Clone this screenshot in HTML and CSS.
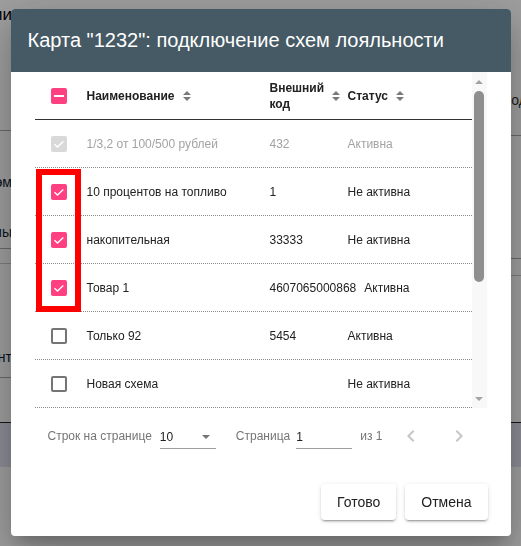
FILE: index.html
```html
<!DOCTYPE html>
<html>

<head>
	<meta charset="utf-8">
	<link rel="stylesheet" href="styles.css">
</head>

<body>
	<!-- Page behind the dialog -->
	<div class="page">
		<div class="page-left">
			<div class="bg-text bg-title"><span>Акции</span></div>
			<div class="bg-rule rule-1"></div>
			<div class="bg-text text-2"><span>Тип схэм</span></div>
			<div class="bg-text text-3"><span>Схемы</span></div>
			<div class="bg-rule rule-4"></div>
			<div class="bg-rule rule-5"></div>
			<div class="bg-text text-6"><span>Клиент</span></div>
			<div class="bg-rule rule-7"></div>
			<div class="bg-band band-left"></div>
		</div>
		<div class="page-right">
			<div class="bg-text text-r1"><span>Код</span></div>
			<div class="bg-rule rule-r2"></div>
			<div class="bg-rule rule-r3"></div>
			<div class="bg-rule rule-r4"></div>
			<div class="bg-band band-right"></div>
		</div>
	</div>

	<div class="overlay">
		<div class="dialog">
			<div class="dialog-title">Карта "1232": подключение схем лояльности</div>

			<div class="dialog-body">
				<div class="table-wrap">
					<div class="table-scroll">
						<div class="row row-head">
							<div class="cell cell-check">
								<span class="checkbox checked"><span class="dash"></span></span>
							</div>
							<div class="cell cell-name head-cell">
								<span class="head-text">Наименование</span>
								<svg class="sort" viewBox="0 0 10 12"><path d="M1 5L5 1L9 5Z M1 7L5 11L9 7Z" /></svg>
							</div>
							<div class="cell cell-code head-cell">
								<span class="head-text">Внешний код</span>
								<svg class="sort" viewBox="0 0 10 12"><path d="M1 5L5 1L9 5Z M1 7L5 11L9 7Z" /></svg>
							</div>
							<div class="cell cell-status head-cell">
								<span class="head-text">Статус</span>
								<svg class="sort" viewBox="0 0 10 12"><path d="M1 5L5 1L9 5Z M1 7L5 11L9 7Z" /></svg>
							</div>
						</div>

						<div class="table-body">
							<div class="row row-disabled">
								<div class="cell cell-check">
									<span class="checkbox disabled"><svg viewBox="0 0 16 16"><path d="M3.5 8.3L6.5 11L12.3 5.4" /></svg></span>
								</div>
								<div class="cell cell-name">1/3,2 от 100/500 рублей</div>
								<div class="cell cell-code">432</div>
								<div class="cell cell-status">Активна</div>
							</div>
							<div class="row">
								<div class="cell cell-check">
									<span class="checkbox checked"><svg viewBox="0 0 16 16"><path d="M3.5 8.3L6.5 11L12.3 5.4" /></svg></span>
								</div>
								<div class="cell cell-name">10 процентов на топливо</div>
								<div class="cell cell-code">1</div>
								<div class="cell cell-status">Не активна</div>
							</div>
							<div class="row">
								<div class="cell cell-check">
									<span class="checkbox checked"><svg viewBox="0 0 16 16"><path d="M3.5 8.3L6.5 11L12.3 5.4" /></svg></span>
								</div>
								<div class="cell cell-name">накопительная</div>
								<div class="cell cell-code">33333</div>
								<div class="cell cell-status">Не активна</div>
							</div>
							<div class="row">
								<div class="cell cell-check">
									<span class="checkbox checked"><svg viewBox="0 0 16 16"><path d="M3.5 8.3L6.5 11L12.3 5.4" /></svg></span>
								</div>
								<div class="cell cell-name">Товар 1</div>
								<div class="cell cell-code">4607065000868</div>
								<div class="cell cell-status">Активна</div>
							</div>
							<div class="row">
								<div class="cell cell-check"><span class="checkbox empty"></span></div>
								<div class="cell cell-name">Только 92</div>
								<div class="cell cell-code">5454</div>
								<div class="cell cell-status">Активна</div>
							</div>
							<div class="row">
								<div class="cell cell-check"><span class="checkbox empty"></span></div>
								<div class="cell cell-name">Новая схема</div>
								<div class="cell cell-code"></div>
								<div class="cell cell-status">Не активна</div>
							</div>
							<div class="row">
								<div class="cell cell-check"><span class="checkbox empty"></span></div>
								<div class="cell cell-name">Скидка 5%</div>
								<div class="cell cell-code">105</div>
								<div class="cell cell-status">Активна</div>
							</div>
							<div class="row">
								<div class="cell cell-check"><span class="checkbox empty"></span></div>
								<div class="cell cell-name">Бонусы за покупки</div>
								<div class="cell cell-code">77</div>
								<div class="cell cell-status">Не активна</div>
							</div>
							<div class="row">
								<div class="cell cell-check"><span class="checkbox empty"></span></div>
								<div class="cell cell-name">Выходные</div>
								<div class="cell cell-code">2020</div>
								<div class="cell cell-status">Активна</div>
							</div>
							<div class="row">
								<div class="cell cell-check"><span class="checkbox empty"></span></div>
								<div class="cell cell-name">Аи-95</div>
								<div class="cell cell-code">95</div>
								<div class="cell cell-status">Не активна</div>
							</div>

							<!-- highlight frame -->
							<div class="mark"></div>
						</div>
					</div>

					<!-- scrollbar -->
					<div class="scrollbar">
						<span class="sb-btn"><span class="sb-up"></span></span>
						<div class="sb-track"><div class="sb-thumb"></div></div>
						<span class="sb-btn"><span class="sb-down"></span></span>
					</div>
				</div>

				<div class="pagination">
					<span class="pager-label">Строк на странице</span>
					<div class="select">
						<span class="value">10</span>
						<span class="caret"></span>
					</div>
					<span class="pager-label page-label">Страница</span>
					<div class="page-input"><span class="value">1</span></div>
					<span class="pager-label total">из 1</span>
					<span class="nav-btn">
						<svg viewBox="0 0 24 24"><path d="M15.41 7.41L14 6l-6 6 6 6 1.41-1.41L10.83 12z" /></svg>
					</span>
					<span class="nav-btn">
						<svg viewBox="0 0 24 24"><path d="M10 6L8.59 7.41 13.17 12l-4.58 4.59L10 18l6-6z" /></svg>
					</span>
				</div>
			</div>

			<div class="dialog-actions">
				<button class="btn">Готово</button>
				<button class="btn">Отмена</button>
			</div>
		</div>
	</div>
</body>

</html>
```

FILE: styles.css
```css
* {
	box-sizing: border-box;
	margin: 0;
	padding: 0;
}

body {
	font-family: "Liberation Sans", Arial, sans-serif;
	background: #fff;
	height: 546px;
	overflow: hidden;
}

/* Background page */
.page {
	display: flex;
	justify-content: space-between;
	height: 546px;
}

.page-left {
	width: 12px;
	display: flex;
	flex-direction: column;
}

.page-right {
	width: 18px;
	display: flex;
	flex-direction: column;
}

.bg-text {
	display: flex;
	white-space: nowrap;
	font-size: 14px;
	line-height: 16px;
	color: #101c33;
}

.page-left .bg-text {
	justify-content: flex-end;
}

.bg-title {
	margin-top: 5px;
	font-size: 17px;
	line-height: 20px;
	color: #000;
}

.bg-rule {
	height: 1px;
	background: #a9a9a9;
}

.bg-band {
	height: 45px;
	background: #e0e2f0;
	border-top: 1px solid #222;
}

.rule-1 { margin-top: 105px; }
.text-2 { margin-top: 43px; }
.text-3 { margin-top: 34px; }
.rule-4 { margin-top: 8px; }
.rule-5 { margin-top: 14px; background: #c8c8c8; }
.text-6 { margin-top: 85px; }
.rule-7 { margin-top: 12px; }
.band-left { margin-top: 44px; }

.text-r1 { margin-top: 92px; color: #333; }
.rule-r2 { margin-top: 27px; }
.rule-r3 { margin-top: 122px; }
.rule-r4 { margin-top: 16px; background: #c8c8c8; }
.band-right { margin-top: 146px; }

/* Dialog */
.overlay {
	position: fixed;
	top: 0;
	left: 0;
	width: 100%;
	height: 100%;
	background: rgba(0, 0, 0, 0.38);
	display: flex;
	justify-content: center;
	align-items: flex-start;
	padding-top: 9px;
}

.dialog {
	width: 500px;
	background: #fff;
	border-radius: 4px;
	overflow: hidden;
	box-shadow: 0 11px 15px -7px rgba(0, 0, 0, 0.2), 0 24px 38px 3px rgba(0, 0, 0, 0.14), 0 9px 46px 8px rgba(0, 0, 0, 0.12);
}

.dialog-title {
	background: #455a64;
	color: #fff;
	font-size: 20px;
	line-height: 23px;
	padding: 20px 17px;
	white-space: nowrap;
}

.dialog-body {
	padding: 0 24px;
}

.table-wrap {
	display: flex;
	height: 336px;
}

.table-scroll {
	flex: 1;
	min-width: 0;
	overflow: hidden;
}

/* scrollbar */
.scrollbar {
	flex: 0 0 15px;
	display: flex;
	flex-direction: column;
	background: #f8f8f8;
}

.sb-btn {
	height: 17px;
	display: flex;
	justify-content: center;
	align-items: center;
}

.sb-up {
	border-left: 4px solid transparent;
	border-right: 4px solid transparent;
	border-bottom: 4px solid #a3a3a3;
	margin-top: 2px;
}

.sb-down {
	border-left: 4px solid transparent;
	border-right: 4px solid transparent;
	border-top: 4px solid #a3a3a3;
	margin-top: -2px;
}

.sb-track {
	flex: 1;
	padding: 2px 3px 0 2px;
}

.sb-thumb {
	height: 191px;
	border-radius: 5px;
	background: #8f8f8f;
}

.row {
	display: flex;
	align-items: center;
	height: 48px;
	border-bottom: 1px dotted #8a8a8a;
	font-size: 12px;
	color: #222;
}

.row-head {
	border-bottom: 1px solid #333;
	font-weight: bold;
	color: #212121;
}

.row-disabled {
	color: #a3a3a3;
}

.cell-check {
	flex: 0 0 52px;
	padding-left: 16px;
	display: flex;
	align-items: center;
}

.cell-name {
	flex: 0 0 183px;
}

.cell-code {
	flex: 0 0 78px;
	padding-right: 8px;
}

.cell-status {
	flex: 1 1 0;
	white-space: nowrap;
}

.head-cell {
	display: flex;
	align-items: center;
	gap: 7px;
	min-width: 0;
}

.head-text {
	line-height: 16px;
}

.sort {
	flex: none;
	width: 10px;
	height: 12px;
	fill: #7a7a7a;
}

.checkbox {
	width: 16px;
	height: 16px;
	border-radius: 2px;
	display: flex;
	align-items: center;
	justify-content: center;
}

.checkbox svg {
	width: 16px;
	height: 16px;
	fill: none;
	stroke: #fff;
	stroke-width: 1.4;
}

.checkbox.checked {
	background: #ff4081;
}

.checkbox.disabled {
	background: #d9d9d9;
}

.checkbox.empty {
	border: 2px solid #757575;
}

.dash {
	width: 10px;
	height: 2px;
	background: #fff;
}

.table-body {
	position: relative;
}

.mark {
	position: absolute;
	top: 49px;
	left: 1px;
	width: 45px;
	height: 143px;
	border: 6px solid #ff0000;
}

/* Pagination */
.pagination {
	display: flex;
	align-items: center;
	height: 56px;
	padding-left: 13px;
	font-size: 12px;
	color: #757575;
	white-space: nowrap;
}

.pagination > * {
	flex: none;
}

.pager-label {
	margin-right: 8px;
}

.select,
.page-input {
	width: 56px;
	height: 26px;
	padding-top: 3px;
	border-bottom: 1px solid #9e9e9e;
	display: flex;
	align-items: center;
	color: #212121;
}

.select {
	justify-content: space-between;
	padding-right: 6px;
	margin-right: 20px;
}

.caret {
	border-left: 4px solid transparent;
	border-right: 4px solid transparent;
	border-top: 4px solid #757575;
}

.page-label {
	margin-right: 6px;
}

.total {
	margin-left: 8px;
	margin-right: 5px;
}

.nav-btn {
	width: 48px;
	height: 48px;
	display: flex;
	align-items: center;
	justify-content: center;
}

.nav-btn svg {
	width: 24px;
	height: 24px;
	fill: #c6c6c6;
}

/* Actions */
.dialog-actions {
	display: flex;
	justify-content: flex-end;
	gap: 9px;
	padding: 20px 23px 16px;
}

.btn {
	height: 36px;
	padding: 0 16px;
	border: none;
	border-radius: 4px;
	background: #fff;
	color: #212121;
	font-family: "Liberation Sans", Arial, sans-serif;
	font-size: 14px;
	box-shadow: 0 3px 1px -2px rgba(0, 0, 0, 0.2), 0 2px 2px 0 rgba(0, 0, 0, 0.14), 0 1px 5px 0 rgba(0, 0, 0, 0.12);
}
```
